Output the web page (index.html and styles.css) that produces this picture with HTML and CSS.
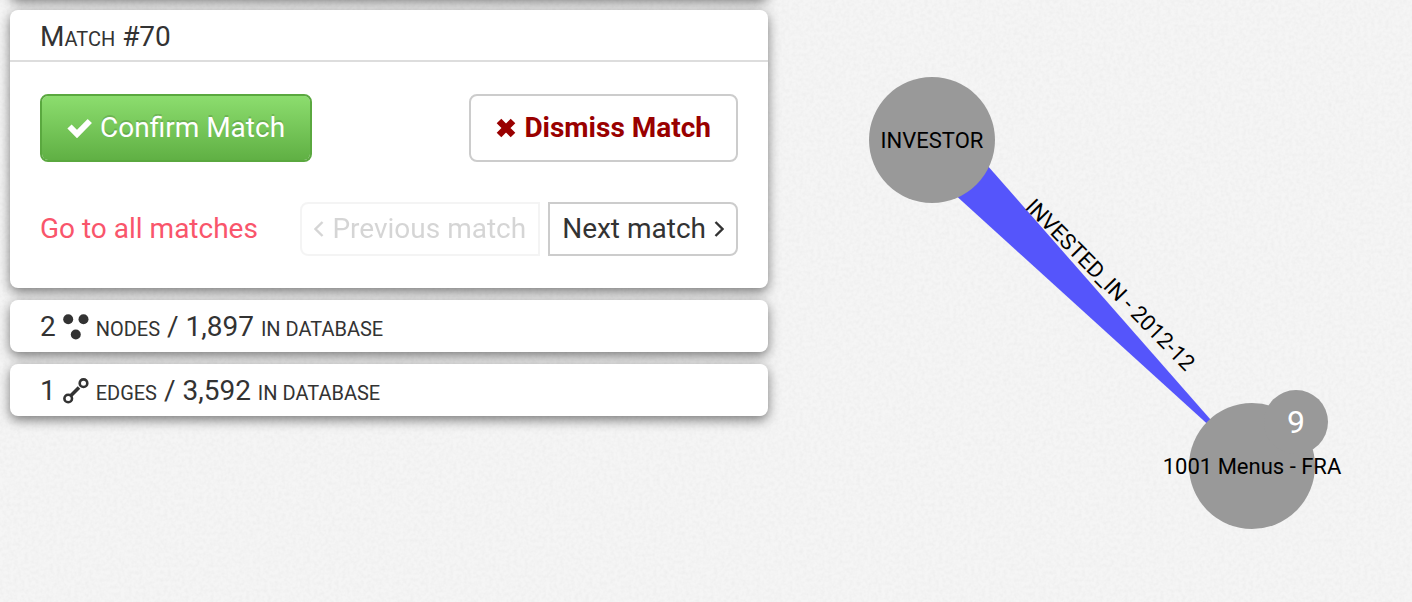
FILE: index.html
```
<!DOCTYPE html>
<html lang="en">
<head>
<meta charset="utf-8">
<title>Match #70</title>
<link rel="stylesheet" href="styles.css">
</head>
<body>
<svg class="paper" aria-hidden="true">
  <filter id="grain" x="0" y="0" width="100%" height="100%">
    <feTurbulence type="fractalNoise" baseFrequency="0.28" numOctaves="2" seed="4"/>
    <feColorMatrix type="matrix" values="0 0 0 0 0.4  0 0 0 0 0.4  0 0 0 0 0.4  0.16 0 0 0 -0.055"/>
  </filter>
  <rect width="100%" height="100%" filter="url(#grain)"/>
</svg>
<main class="layout">
  <div class="panel">
    <section class="card card-scrolled"></section>
    <section class="card">
      <h1 class="card-title card-title-open">M<span class="caps">atch</span> #70</h1>
      <div class="card-body">
        <div class="row">
          <button class="btn btn-confirm" type="button">
            <svg class="icon-check" viewBox="0 0 25 20" aria-hidden="true"><path d="M2.500 8.500 10 16 22.800 3" fill="none" stroke="currentColor" stroke-width="6"/></svg>
            Confirm Match
          </button>
          <button class="btn btn-dismiss" type="button">
            <svg class="icon-cross" viewBox="0 0 20 20" aria-hidden="true"><path d="M3 3 17 17M17 3 3 17" fill="none" stroke="currentColor" stroke-width="6.500"/></svg>
            Dismiss Match
          </button>
        </div>
        <div class="row">
          <a class="all-link" href="#">Go to all matches</a>
          <div class="pager">
            <button class="btn btn-prev" type="button" disabled>
              <svg class="icon-angle" viewBox="0 0 10 18" aria-hidden="true"><path d="M8.500 2 1.500 9 8.500 16" fill="none" stroke="currentColor" stroke-width="2.400"/></svg>
              Previous match
            </button>
            <button class="btn btn-next" type="button">
              Next match
              <svg class="icon-angle" viewBox="0 0 10 18" aria-hidden="true"><path d="M1.500 2 8.500 9 1.500 16" fill="none" stroke="currentColor" stroke-width="2.400"/></svg>
            </button>
          </div>
        </div>
      </div>
    </section>
    <section class="card">
      <h2 class="card-title">2 <svg class="icon-graph" viewBox="0 0 26 26" aria-hidden="true"><g fill="currentColor"><circle cx="5.200" cy="5.200" r="5"/><circle cx="20.500" cy="5.200" r="5"/><circle cx="12.800" cy="20.500" r="5"/></g></svg> <span class="caps">nodes</span> / 1,897 <span class="caps">in database</span></h2>
    </section>
    <section class="card">
      <h2 class="card-title">1 <svg class="icon-graph" viewBox="0 0 26 26" aria-hidden="true"><g fill="none" stroke="currentColor"><circle cx="5.200" cy="20.500" r="3.800" stroke-width="2.600"/><circle cx="20.500" cy="5.200" r="3.800" stroke-width="2.600"/><path d="M7.500 18 16 9.500" stroke-width="3.500"/></g></svg> <span class="caps">edges</span> / 3,592 <span class="caps">in database</span></h2>
    </section>
  </div>
  <svg class="graph" viewBox="0 0 644 602" role="img" aria-label="Match graph">
    <polygon class="edge" points="197,140 457,436 457,440 162,172"/>
    <text class="label" transform="translate(337 290) rotate(45.500)">INVESTED_IN - 2012-12</text>
    <circle class="node" cx="164" cy="140" r="63"/>
    <text class="label" x="164" y="148">INVESTOR</text>
    <circle class="node" cx="484" cy="466" r="63"/>
    <circle class="node" cx="528" cy="422" r="32"/>
    <text class="count" x="528" y="433">9</text>
    <text class="label" x="484" y="474">1001 Menus - FRA</text>
  </svg>
</main>
</body>
</html>
```
FILE: styles.css
```
* {
  box-sizing: border-box;
}

body {
  margin: 0;
  overflow: hidden;
  background: #f5f5f5;
  color: #333;
  font: 28px/40px Roboto, "Liberation Sans", sans-serif;
}

.paper {
  position: absolute;
  inset: 0;
  z-index: -1;
  width: 100%;
  height: 100%;
}

.layout {
  display: grid;
  grid-template-columns: 379fr 322fr;
  padding-left: 10px;
}

.panel {
  display: flex;
  flex-direction: column;
  gap: 12px;
}

.card {
  background: #fff;
  border-radius: 8px;
  box-shadow: 0 4px 12px rgba(0, 0, 0, 0.5);
}

/* Card that has been scrolled past the top edge; only its shadow shows. */
.card-scrolled {
  height: 52px;
  margin-top: -54px;
}

.card-title {
  margin: 0;
  padding: 8px 30px 4px;
  border-bottom: 2px solid transparent;
  font-size: 28px;
  font-weight: 400;
  line-height: 38px;
}

.card-title-open {
  border-color: #ddd;
}

.caps {
  font-size: 20px;
  line-height: 20px;
  text-transform: uppercase;
}

.card-body {
  display: flex;
  flex-direction: column;
  gap: 40px;
  padding: 32px 30px;
}

.row,
.pager,
.btn {
  display: flex;
  align-items: center;
}

.row {
  justify-content: space-between;
}

.pager {
  gap: 8px;
}

.btn {
  gap: 8px;
  border: 2px solid #ccc;
  border-radius: 8px;
  background: #fff;
  color: #333;
  font: inherit;
  white-space: nowrap;
}

.btn-confirm,
.btn-dismiss {
  padding: 12px 25px;
}

.btn-confirm {
  border-color: #5aa83f;
  background: linear-gradient(#8cdd6e, #60b044) padding-box;
  color: #fff;
  text-shadow: 0 -2px 0 rgba(0, 0, 0, 0.15);
}

.btn-dismiss {
  color: #900;
  font-weight: 700;
}

.btn-prev,
.btn-next {
  padding: 5px 12px;
}

.btn-prev {
  border-radius: 8px 0 0 8px;
  opacity: 0.2;
}

.btn-next {
  border-radius: 0 8px 8px 0;
}

.all-link {
  color: #f9556b;
  text-decoration: none;
}

.icon-check {
  width: 25px;
  height: 20px;
}

.icon-cross {
  width: 20px;
  height: 20px;
}

.icon-angle {
  width: 10px;
  height: 18px;
}

.icon-graph {
  width: 26px;
  height: 26px;
  vertical-align: -4px;
}

.graph {
  width: 100%;
}

.edge {
  fill: #5555fb;
}

.node {
  fill: #999;
}

.label {
  fill: #000;
  font-size: 22px;
  text-anchor: middle;
}

.count {
  fill: #fff;
  font-size: 32px;
  text-anchor: middle;
}
```
